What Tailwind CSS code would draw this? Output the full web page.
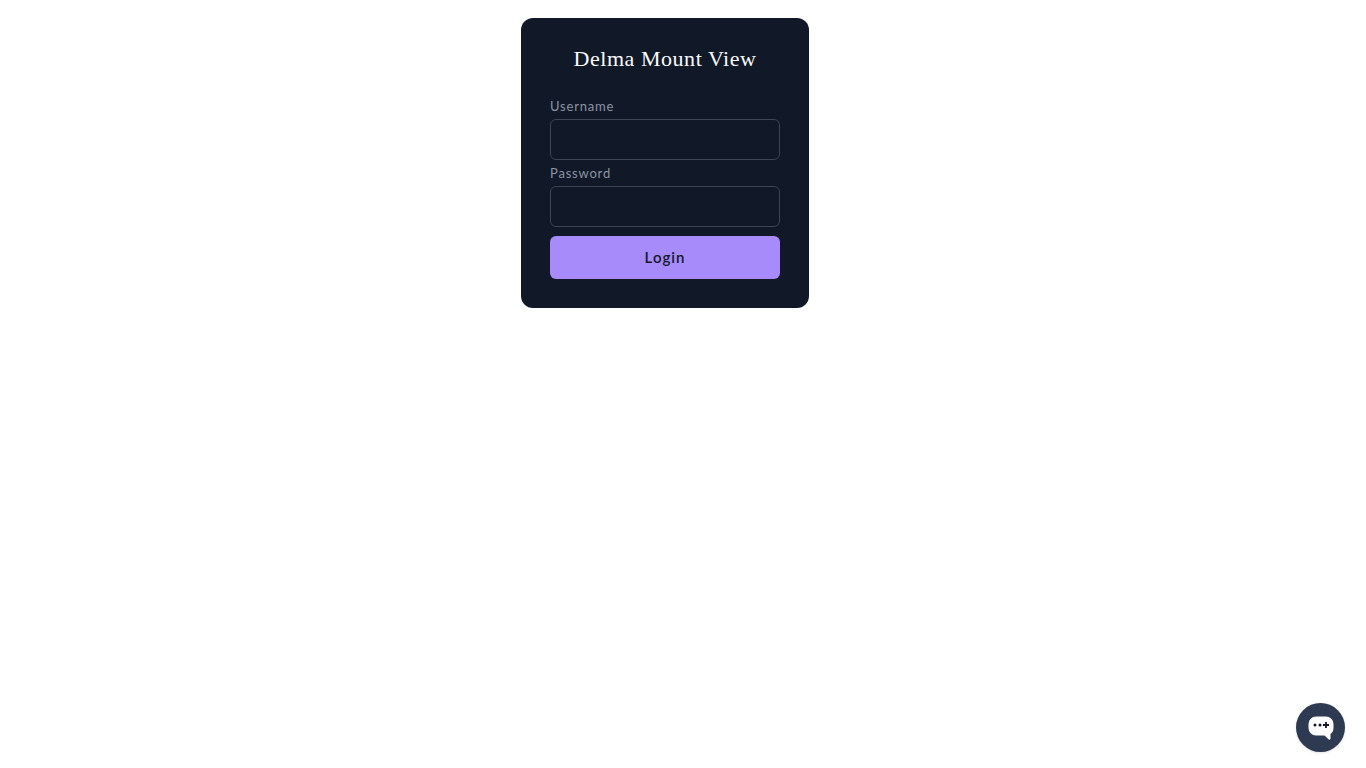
<!DOCTYPE html>
<html lang="en">
<head>
<meta charset="utf-8">
<title>Delma Mount View</title>
<script src="https://cdn.jsdelivr.net/npm/@tailwindcss/browser@4"></script>
</head>
<body class="bg-white h-[768px] overflow-hidden font-['Lato',sans-serif]">
  <div class="flex justify-center pt-[18px] pr-[36px]">
    <form class="w-[288px] h-[290px] bg-[#111827] rounded-xl px-[29px] pt-[28px]">
      <h1 class="text-[22px] leading-[26px] text-center text-[#f9fafb] tracking-[0.55px] font-['Liberation_Serif',serif] mb-[24px]">Delma Mount View</h1>
      <label class="block text-[13px] leading-[20px] tracking-[0.8px] text-[#8b95a3] mb-[3px]">Username</label>
      <input type="text" class="block w-full h-[41px] bg-[#111827] border border-[#3b4657] rounded-md mb-[3px]">
      <label class="block text-[13px] leading-[20px] tracking-[0.8px] text-[#8b95a3] mb-[3px]">Password</label>
      <input type="password" class="block w-full h-[41px] bg-[#111827] border border-[#3b4657] rounded-md mb-[9px]">
      <button type="button" class="block w-full h-[43px] bg-[#a78bfa] rounded-md text-[#111827] text-[15px] font-semibold tracking-[1px]">Login</button>
    </form>
  </div>
  <div class="fixed right-[21px] bottom-[16px] w-[49px] h-[49px] rounded-full bg-[#2d3a52] flex items-center justify-center shadow-sm">
    <svg width="26" height="24" viewBox="0 0 26 24">
      <path d="M8 .5h10a7.500 7.500 0 0 1 7.500 7.500v4a7.500 7.500 0 0 1-3 6v4.500c0 1.300-1.500 1.500-2.300.5L16.500 19.500H8A7.500 7.500 0 0 1 .5 12V8A7.500 7.500 0 0 1 8 .5z" fill="#ffffff"/>
      <circle cx="7" cy="9" r="1.500" fill="#111827"/>
      <circle cx="12" cy="9" r="1.500" fill="#111827"/>
      <path d="M18 6v6M15 9h6" stroke="#111827" stroke-width="1.800"/>
    </svg>
  </div>
</body>
</html>
